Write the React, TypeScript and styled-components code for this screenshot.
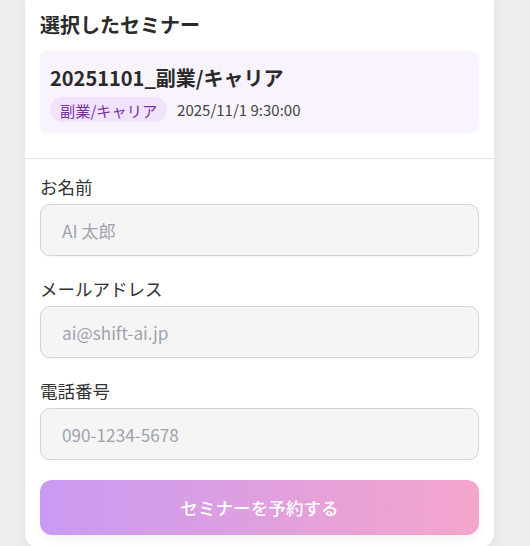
import React from "react";
import styled, { createGlobalStyle } from "styled-components";

const Global = createGlobalStyle`
  html, body {
    margin: 0;
    padding: 0;
    background: #ededed;
    font-family: "Noto Sans CJK JP", "Noto Sans", sans-serif;
    color: #333;
  }
  * { box-sizing: border-box; }
`;

const Page = styled.div`
  padding-left: 25px;
  width: 494px;
`;

const Card = styled.div`
  background: #fff;
  border-radius: 0 0 16px 16px;
  box-shadow: 0 2px 10px rgba(0, 0, 0, 0.06);
  padding-bottom: 14px;
`;

const Section = styled.section`
  padding: 10px 15px 25px;
  border-bottom: 1px solid #e5e5e5;
`;

const Heading = styled.h2`
  margin: 0 0 11px;
  font-size: 20px;
  line-height: 30px;
  font-weight: 700;
  color: #2a2a2a;
`;

const SeminarBox = styled.div`
  background: #f9f3fe;
  border-radius: 6px;
  padding: 12px 10px 11px;
`;

const SeminarTitle = styled.div`
  font-size: 20px;
  line-height: 30px;
  font-weight: 700;
  color: #2a2a2a;
`;

const MetaRow = styled.div`
  display: flex;
  align-items: center;
  gap: 10px;
  margin-top: 4px;
`;

const Tag = styled.span`
  display: inline-flex;
  align-items: center;
  height: 25px;
  padding: 0 10px;
  border-radius: 13px;
  background: #f1e3fc;
  color: #7a2fa8;
  font-size: 15.2px;
`;

const DateText = styled.span`
  font-size: 15px;
  color: #444;
`;

const Form = styled.form`
  display: flex;
  flex-direction: column;
  gap: 20px;
  padding: 15px 15px 0;
`;

const Field = styled.label`
  display: flex;
  flex-direction: column;
  gap: 5px;
`;

const LabelText = styled.span`
  font-size: 17.5px;
  line-height: 25px;
  color: #333;
`;

const Input = styled.input`
  height: 52px;
  width: 100%;
  border: 1px solid #d3d3da;
  border-radius: 10px;
  background: #f5f5f5;
  padding: 0 21px;
  font-family: inherit;
  font-size: 17.2px;
  color: #333;
  outline: none;
  box-shadow: 0 1px 2px rgba(0, 0, 0, 0.04);
  &::placeholder {
    color: #9ea2ad;
  }
`;

const Submit = styled.button`
  height: 55px;
  width: 100%;
  border: none;
  border-radius: 12px;
  background: linear-gradient(90deg, #c99af2 0%, #f5a5cb 100%);
  color: #fff;
  font-family: inherit;
  font-size: 17.6px;
  font-weight: 500;
  cursor: pointer;
  box-shadow: 0 4px 10px rgba(0, 0, 0, 0.05);
`;

export default function App() {
  return (
    <>
      <Global />
      <Page>
        <Card>
          <Section>
            <Heading>選択したセミナー</Heading>
            <SeminarBox>
              <SeminarTitle>20251101_副業/キャリア</SeminarTitle>
              <MetaRow>
                <Tag>副業/キャリア</Tag>
                <DateText>2025/11/1 9:30:00</DateText>
              </MetaRow>
            </SeminarBox>
          </Section>
          <Form onSubmit={(e) => e.preventDefault()}>
            <Field>
              <LabelText>お名前</LabelText>
              <Input placeholder="AI 太郎" />
            </Field>
            <Field>
              <LabelText>メールアドレス</LabelText>
              <Input placeholder="ai@shift-ai.jp" />
            </Field>
            <Field>
              <LabelText>電話番号</LabelText>
              <Input placeholder="090-1234-5678" />
            </Field>
            <Submit type="submit">セミナーを予約する</Submit>
          </Form>
        </Card>
      </Page>
    </>
  );
}
